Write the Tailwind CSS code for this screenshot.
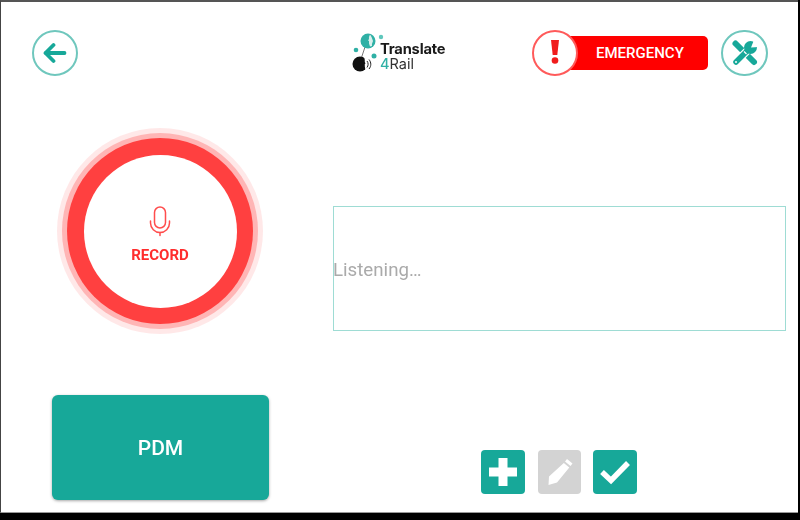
<!DOCTYPE html>
<html lang="en">
<head>
  <meta charset="UTF-8">
  <title>Translate4Rail</title>
  <script src="https://cdn.jsdelivr.net/npm/@tailwindcss/browser@4"></script>
</head>
<body class="bg-black font-['Roboto',sans-serif] overflow-hidden antialiased">
  <div class="w-[800px] h-[520px] bg-black">
    <div class="w-[798px] h-[513px] bg-white border-l border-l-[#444] border-t-2 border-t-[#555] border-b border-b-[#999] flex flex-col">
      <div class="flex flex-col flex-1 min-h-0 blur-[0.4px]">

      <!-- Header -->
      <header class="h-[126px] shrink-0 flex items-start pt-[28px] pl-[31px]">
        <button class="w-[46px] h-[46px] rounded-full border-2 border-[#6fc7bd] flex items-center justify-center">
          <svg width="24" height="24" viewBox="0 0 24 24" fill="none" stroke="#17a899" stroke-width="3.800" stroke-linecap="round" stroke-linejoin="round"><path d="M21.500 12H3"/><path d="M10.500 4 2.500 12l8 8"/></svg>
        </button>

        <!-- Logo -->
        <div class="relative ml-[274px] mt-[2px] w-[96px] h-[42px]">
          <svg class="absolute left-0 top-0" width="36" height="42" viewBox="0 0 36 42">
            <path d="M13 15 9 27" stroke="#777" stroke-width="1"/>
            <circle cx="16" cy="9" r="7.500" fill="#2fb0a5"/>
            <path d="M18 2.500c-.500 1.500-1.500 2.500-1 4.500l-1 1.500 1 .500v2.500l1 3 2-.500c-.300-2 .500-3.500 1-5-.800-2.500-1.500-4.500-3-6.500z" fill="#d8f0ed"/>
            <circle cx="29" cy="5" r="2.200" fill="#5fc7bc"/>
            <circle cx="4" cy="18" r="2.300" fill="#2fb0a5"/>
            <circle cx="22" cy="24" r="2.500" fill="#2fb0a5"/>
            <circle cx="8" cy="32" r="7.500" fill="#111"/>
            <path d="M12.500 26c.300 1.500.300 2.500.300 4l.700 1.500-.700.500v2.500l.700 3.500a8 8 0 0 0 0-12z" fill="#fff"/>
            <path d="M15 29c1.500 2 1.500 4.500 0 6.500M17 27.500c2.400 3 2.400 6.500 0 9.500" stroke="#222" stroke-width="1" fill="none"/>
          </svg>
          <span class="absolute left-[28px] top-[10px] text-[14.700px] leading-[14px] font-bold font-['Inter',sans-serif] text-[#1a1a1a] tracking-[-0.2px]">Translate</span>
          <span class="absolute left-[28px] top-[24px] text-[14.500px] leading-[16px] font-['Inter',sans-serif] text-[#333]"><span class="text-[#2fb0a5] font-medium">4</span>Rail</span>
        </div>

        <!-- Emergency -->
        <div class="relative ml-[84px] w-[176px] h-[46px] flex items-center">
          <div class="ml-[20px] w-[156px] h-[34px] bg-[#ff0000] rounded-[5px] flex items-center pl-[44px] text-white text-[15px] font-medium">EMERGENCY</div>
          <div class="absolute left-0 top-0 w-[46px] h-[46px] rounded-full bg-white border-2 border-[#ff5a5a] flex items-center justify-center">
            <svg width="10" height="26" viewBox="0 0 10 26" fill="#f01c1c"><path d="M1 0h8L7.300 15H2.700z"/><circle cx="5" cy="20.500" r="3.300"/></svg>
          </div>
        </div>

        <button class="ml-[13px] w-[47px] h-[46px] rounded-full border-2 border-[#6fc7bd] flex items-center justify-center">
          <svg width="28" height="28" viewBox="0 0 28 28" fill="none">
            <path d="M4.500 4.500 23 23" stroke="#17a899" stroke-width="6" stroke-linecap="round"/>
            <path d="M5 23 17 11" stroke="#fff" stroke-width="8"/>
            <path d="M5 23 17 11" stroke="#17a899" stroke-width="5.500" stroke-linecap="round"/>
            <circle cx="19.500" cy="8.500" r="6.500" fill="#17a899"/>
            <path d="M20 8.500 23 1h5v7z" fill="#fff"/>
            <path d="M13 12.500 15.500 15" stroke="#fff" stroke-width="1.200"/>
            <circle cx="5" cy="23" r="1" fill="#fff"/>
          </svg>
        </button>
      </header>

      <!-- Body -->
      <main class="flex flex-1 min-h-0">
        <section class="w-[332px] shrink-0 flex flex-col pl-[51px]">
          <button class="ml-[5px] w-[206px] h-[206px] rounded-full bg-[#ff4040]/12 flex items-center justify-center">
            <span class="w-[196px] h-[196px] rounded-full bg-[#ff4040]/30 flex items-center justify-center">
              <span class="w-[186px] h-[186px] rounded-full bg-[#ff4040] flex items-center justify-center">
                <span class="w-[153px] h-[153px] rounded-full bg-white flex flex-col items-center pt-[51px]">
                  <svg width="24" height="32" viewBox="0 0 24 32" fill="none" stroke="#ff4d4d" stroke-width="1.500" stroke-linecap="round"><rect x="6.500" y="1" width="11" height="21" rx="5.500"/><path d="M2.500 15v2a9.500 9.500 0 0 0 19 0v-2"/><path d="M12 26.500v3"/></svg>
                  <span class="mt-[8px] text-[15px] leading-[18px] font-bold text-[#ff2d2d]">RECORD</span>
                </span>
              </span>
            </span>
          </button>
          <button class="mt-[61px] w-[217px] h-[105px] pt-[3px] bg-[#17a899] rounded-[6px] shadow-[0_1px_3px_rgba(0,0,0,0.35)] text-white text-[21px] font-medium">PDM</button>
        </section>

        <section class="flex-1 flex flex-col pt-[78px]">
          <div class="w-[453px] h-[125px] pt-[3px] border border-[#9edcd4] flex items-center text-[18.700px] text-[#aaaaaa]"><span class="-ml-px">Listening…</span></div>
          <div class="mt-[119px] ml-[148px] flex gap-[13px]">
            <button class="w-[44px] h-[44px] bg-[#17a899] rounded-[4px] flex items-center justify-center">
              <svg width="30" height="30" viewBox="0 0 30 30" fill="#fff"><path d="M10.500 1h9v9.500H29v9h-9.500V29h-9v-9.500H1v-9h9.500z"/></svg>
            </button>
            <button class="w-[43px] h-[44px] bg-[#d3d3d3] rounded-[4px] flex items-center justify-center">
              <svg width="28" height="28" viewBox="0 0 28 28" fill="#fff"><path d="M21 1l5.500 4.500-2 2.500-5.500-4.500zM17.800 5 23.300 9.500 11 24.500 2.500 27l.5-8.500z"/></svg>
            </button>
            <button class="ml-[-1px] w-[44px] h-[44px] bg-[#17a899] rounded-[4px] flex items-center justify-center">
              <svg width="32" height="26" viewBox="0 0 32 26" fill="none" stroke="#fff" stroke-width="5.500" stroke-linejoin="miter"><path d="M3 13l9 8.500L29 4"/></svg>
            </button>
          </div>
        </section>
      </main>
      </div>
    </div>
  </div>
</body>
</html>
